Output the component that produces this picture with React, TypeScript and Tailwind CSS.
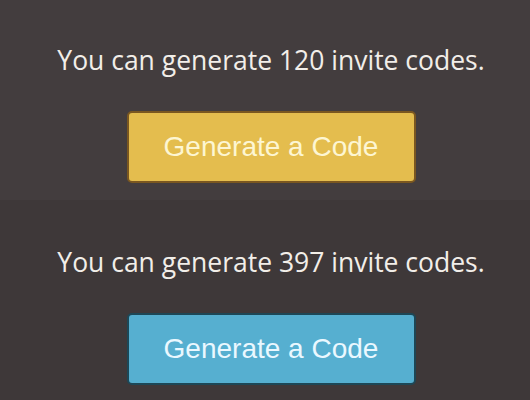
function InviteBlock({ count, tone }: { count: number; tone: "yellow" | "blue" }) {
  const btn =
    tone === "yellow"
      ? "bg-[#e4bd4e] border-[#7a5720] text-[#fdf6d2]"
      : "bg-[#56afd0] border-[#1d4756] text-[#eaf8ff]"
  const bg = tone === "yellow" ? "bg-[#433d3e]" : "bg-[#3e3839]"
  return (
    <div className={`h-[200px] flex flex-col items-center pl-[12px] ${bg}`}>
      <p
        className={`${tone === "yellow" ? "mt-[42px]" : "mt-[44px]"} text-[26.5px] leading-[36px] text-[#f2eee9] font-['Open_Sans',sans-serif]`}
      >
        You can generate {count} invite codes.
      </p>
      <button
        className={`mt-[33px] w-[289px] h-[72px] rounded-[5px] border-2 text-[28px] font-['Liberation_Sans',Arial,sans-serif] ${btn}`}
      >
        Generate a Code
      </button>
    </div>
  )
}

export default function App() {
  return (
    <div className="w-[530px] h-[400px] overflow-hidden">
      <InviteBlock count={120} tone="yellow" />
      <InviteBlock count={397} tone="blue" />
    </div>
  )
}
